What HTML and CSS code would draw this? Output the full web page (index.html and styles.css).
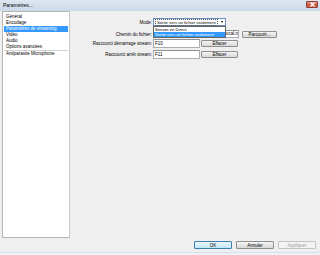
FILE: index.html
```html
<!DOCTYPE html>
<html lang="fr">
<head>
<meta charset="utf-8">
<title>Paramètres...</title>
<link rel="stylesheet" href="styles.css">
</head>
<body>
<div class="window">
  <div class="titlebar">
    <span class="title">Paramètres...</span>
    <span class="close"><svg width="7" height="5" viewBox="0 0 7 5"><path d="M1.5 0.5 L5.5 4.5 M5.5 0.5 L1.5 4.5" stroke="#fff" stroke-width="1.2"/></svg></span>
  </div>
  <div class="main">
    <ul class="sidebar">
      <li>Général</li>
      <li>Encodage</li>
      <li class="selected">Paramètres de streaming</li>
      <li>Vidéo</li>
      <li>Audio</li>
      <li class="sep">Options avancées</li>
      <li>Antiparasite Microphone</li>
    </ul>
    <div class="content">
      <div class="form">
        <div class="row r1">
          <span class="label">Mode:</span>
          <div class="select-wrap">
            <div class="select"><span class="value">Sortie vers un fichier seulement</span><span class="arrow"></span></div>
            <ul class="dropdown">
              <li>Stream en Direct</li>
              <li class="sel">Sortie vers un fichier seulement</li>
            </ul>
          </div>
        </div>
        <div class="row r2">
          <span class="label">Chemin du fichier:</span>
          <div class="input path"><span class="path-text">local.mp4</span></div>
          <div class="btn browse">Parcourir...</div>
        </div>
        <div class="row r3">
          <span class="label">Raccourci démarrage stream:</span>
          <div class="input key">F10</div>
          <div class="btn clear">Effacer</div>
        </div>
        <div class="row r4">
          <span class="label">Raccourci arrêt stream:</span>
          <div class="input key">F11</div>
          <div class="btn clear">Effacer</div>
        </div>
      </div>
      <div class="actions">
        <div class="btn action default">OK</div>
        <div class="btn action">Annuler</div>
        <div class="btn action disabled">Appliquer</div>
      </div>
    </div>
  </div>
  <div class="footer"></div>
</div>
</body>
</html>
```
FILE: styles.css
```css
* { box-sizing: border-box; }
html, body { margin: 0; padding: 0; }
body {
  width: 320px;
  height: 255px;
  overflow: hidden;
  font-family: "Liberation Sans", Arial, sans-serif;
  font-size: 4.5px;
  color: #000;
  background: #f0f0f0;
}
.window {
  width: 320px;
  height: 255px;
  display: flex;
  flex-direction: column;
  background: #efefef;
}
.titlebar {
  height: 11px;
  flex: none;
  display: flex;
  align-items: flex-start;
  justify-content: space-between;
  background: linear-gradient(#dde6f1, #ccd9e9);
  padding: 2px 2px 0 3px;
}
.title { font-size: 5px; line-height: 6px; }
.close {
  width: 12px;
  height: 7px;
  margin-top: -1px;
  border-radius: 1px;
  background: linear-gradient(#e3a393, #c7513d 55%, #d86c55);
  border: 1px solid #8e3b2e;
  display: flex;
  align-items: center;
  justify-content: center;
}
.main {
  flex: 1;
  display: flex;
  align-items: flex-start;
}
.sidebar {
  list-style: none;
  margin: 0 0 0 2px;
  padding: 2px 1px;
  width: 68px;
  height: 227px;
  flex: none;
  background: #fff;
  border: 1px solid #b4b4b4;
  border-right-color: #c8c8c8;
}
.sidebar li {
  height: 6px;
  line-height: 6px;
  padding-left: 2px;
  white-space: nowrap;
}
.sidebar li.selected { background: #3399ff; color: #fff; }
.sidebar li.sep { border-bottom: 1px solid #d0d0d0; height: 7px; }
.content {
  flex: 1;
  align-self: stretch;
  display: flex;
  flex-direction: column;
  padding: 7px 4px 3px 0;
}
.form { display: flex; flex-direction: column; }
.row {
  display: flex;
  align-items: center;
  gap: 1px;
}
.row.r2 { margin-top: 4px; }
.row.r3 { margin-top: 1px; }
.row.r4 { margin-top: 2px; }
.label {
  width: 82px;
  flex: none;
  text-align: right;
  white-space: nowrap;
}
.select-wrap { position: relative; font-size: 4.2px; }
.select {
  width: 73px;
  height: 8px;
  border: 1px solid #6b8ec4;
  background: #fff;
  display: flex;
  align-items: center;
  justify-content: space-between;
  padding: 0 2px 0 1px;
  white-space: nowrap;
}
.value { border: 0.5px dotted #555; line-height: 5px; padding: 0 1px; }
.arrow {
  width: 0; height: 0;
  border-left: 1.5px solid transparent;
  border-right: 1.5px solid transparent;
  border-top: 2px solid #000;
}
.dropdown {
  position: absolute;
  left: 0;
  top: 8px;
  width: 73px;
  margin: 0;
  padding: 0;
  list-style: none;
  background: #fff;
  border: 1px solid #646464;
  z-index: 2;
}
.dropdown li { height: 5px; line-height: 5px; padding-left: 1px; white-space: nowrap; }
.dropdown li.sel { background: #3399ff; color: #fff; }
.input {
  height: 8px;
  background: #fff;
  border: 1px solid #abadb3;
  border-top-color: #8e8f8f;
  padding-left: 1px;
  line-height: 6px;
  white-space: nowrap;
  overflow: hidden;
}
.path { width: 86px; display: flex; padding-left: 72px; }
.path-text { margin-left: -1px; }
.key { width: 47px; height: 9px; line-height: 7px; }
.btn {
  height: 7px;
  display: flex;
  align-items: center;
  justify-content: center;
  border: 1px solid #8f8f8f;
  border-radius: 1px;
  background: linear-gradient(#f6f6f6, #e5e5e5 50%, #d9d9d9);
  white-space: nowrap;
}
.browse { width: 35px; margin-left: 2px; }
.clear { width: 37px; }
.actions {
  margin-top: auto;
  display: flex;
  justify-content: flex-end;
  gap: 4px;
  margin-bottom: 0;
}
.action { width: 38px; height: 8px; }
.action.default { border-color: #3c7fb1; background: linear-gradient(#eaf6fd, #d9f0fc 50%, #bee6fd); }
.action.disabled { border-color: #c3c3c3; color: #a0a0a0; background: #f4f4f4; }
.footer {
  height: 3px;
  flex: none;
  border-top: 1px solid #d6e0ec;
  background: #eef2f7;
}
```
